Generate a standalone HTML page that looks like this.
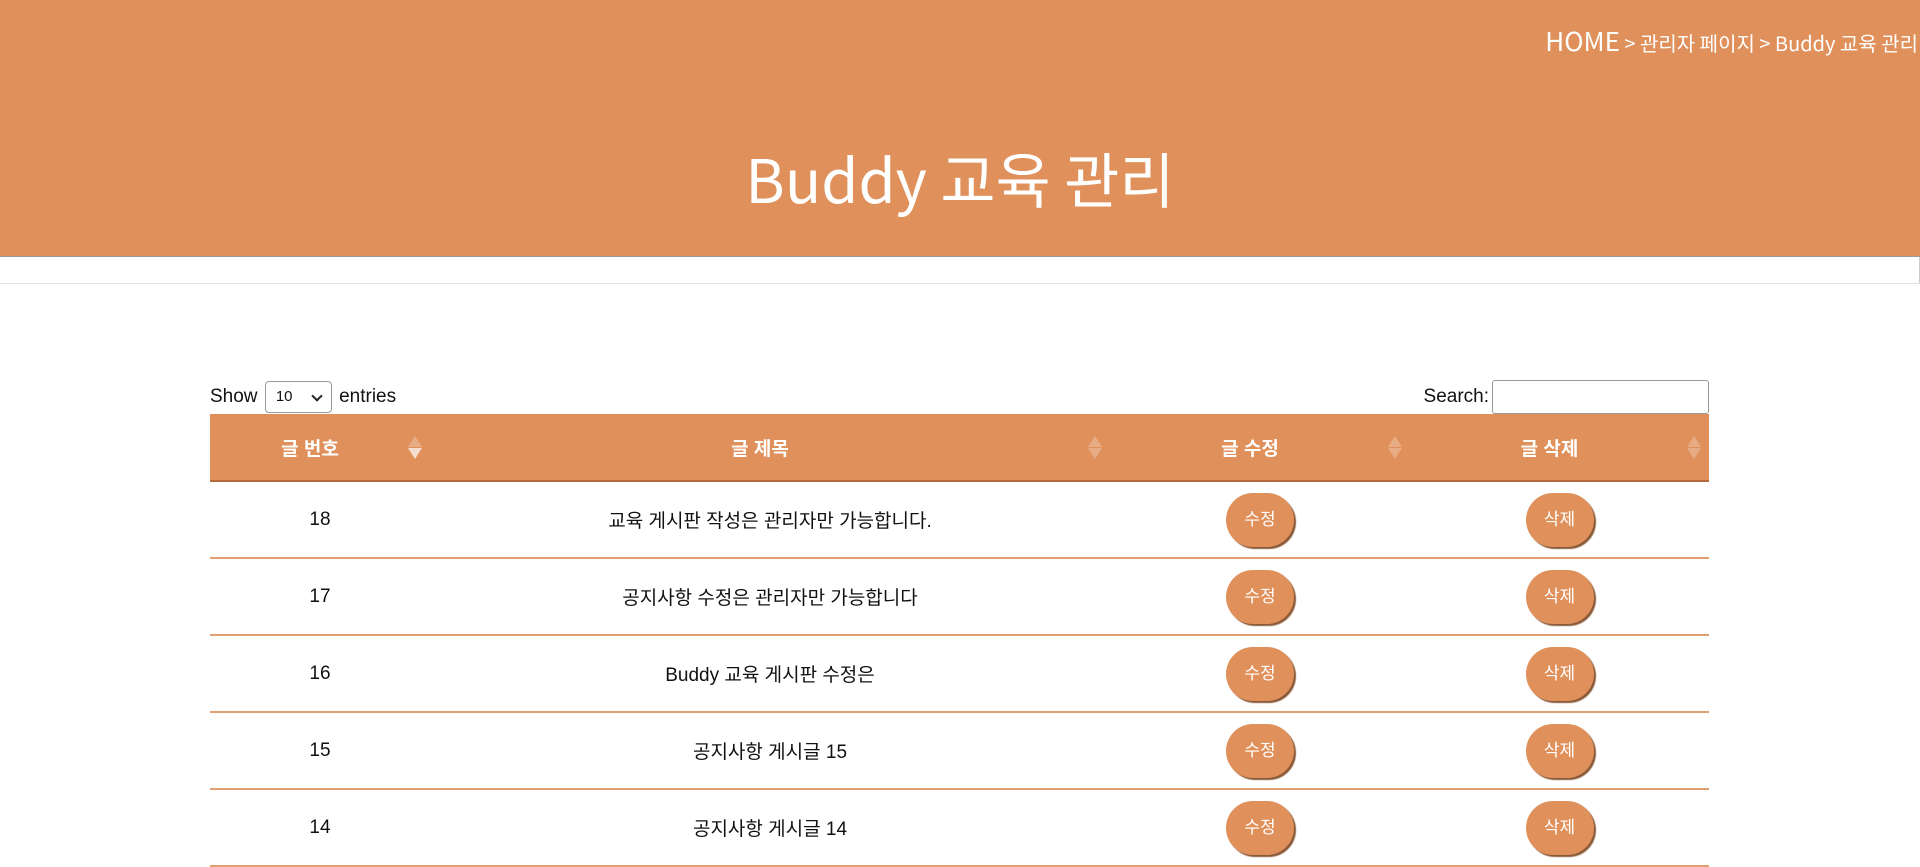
<!DOCTYPE html>
<html><head><meta charset="utf-8"><style>
*{box-sizing:border-box;margin:0;padding:0}
body{width:1920px;height:866px;overflow:hidden;background:#fff;font-family:"Liberation Sans","Noto Sans CJK KR",sans-serif;color:#111}
.hero{position:absolute;left:0;top:0;width:1920px;height:257px;background:#e0915b;border-bottom:1px solid #999}
.crumb{position:absolute;right:2px;top:22px;color:#fff;font-size:20px;white-space:nowrap;font-family:"Noto Sans CJK KR",sans-serif}
.crumb b{font-weight:normal;font-size:26px}
.title{position:absolute;left:0;width:1920px;top:138px;text-align:center;color:#fff;font-size:60px;line-height:80px;font-family:"Noto Sans CJK KR",sans-serif}
.strip{position:absolute;left:0;top:257px;width:1920px;height:27px;border-bottom:1px solid #e4e4e4;border-right:1px solid #ccc}
.show{position:absolute;left:210px;top:381px;font-size:19px;line-height:32px}
.sel{display:inline-block;vertical-align:middle;width:67px;height:32px;border:1px solid #999;border-radius:4px;font-size:15px;line-height:30px;padding-left:10px;position:relative;margin:0 2px}
.sel:after{content:"";position:absolute;right:10px;top:10px;width:6px;height:6px;border-right:2px solid #222;border-bottom:2px solid #222;transform:rotate(45deg)}
.search{position:absolute;right:211px;top:380px;font-size:19px;line-height:33px}
.search span{display:inline-block;vertical-align:middle;width:217px;height:34px;border:1px solid #999;border-radius:3px;margin-left:3px}
table{position:absolute;left:210px;top:414px;width:1499px;border-collapse:collapse}
th{background:#e0915b;color:#fff;font-weight:bold;font-size:19px;height:67px;border-bottom:2px solid #b46a3a;position:relative;padding-right:20px}
th i{position:absolute;right:15px;top:22px;width:0;height:0}
th i:before{content:"";position:absolute;left:-7px;top:0;border:7px solid transparent;border-top:0;border-bottom:11px solid rgba(255,255,255,.25)}
th i:after{content:"";position:absolute;left:-7px;top:12px;border:7px solid transparent;border-bottom:0;border-top:11px solid rgba(255,255,255,.25)}
th i.d:after{border-top-color:rgba(255,255,255,.7)}
td{height:77px;border-bottom:2px solid #e0a070;text-align:center;font-size:19px}
.b{display:inline-block;width:68px;height:54px;border-radius:27px;background:#e0915b;color:#fff;font-size:17px;line-height:54px;box-shadow:2px 2px 1px #8a5a38;vertical-align:middle}
</style></head><body>
<div class="hero"><div class="crumb"><b>HOME</b> &gt; 관리자 페이지 &gt; Buddy 교육 관리</div>
<div class="title">Buddy 교육 관리</div></div>
<div class="strip"></div>
<div class="show">Show <span class="sel">10</span> entries</div>
<div class="search">Search:<span></span></div>
<table>
<tr><th style="width:220px">글 번호<i class="d"></i></th><th style="width:680px">글 제목<i></i></th><th style="width:300px">글 수정<i></i></th><th>글 삭제<i></i></th></tr>
<tr><td>18</td><td>교육 게시판 작성은 관리자만 가능합니다.</td><td><span class="b">수정</span></td><td><span class="b">삭제</span></td></tr>
<tr><td>17</td><td>공지사항 수정은 관리자만 가능합니다</td><td><span class="b">수정</span></td><td><span class="b">삭제</span></td></tr>
<tr><td>16</td><td>Buddy 교육 게시판 수정은</td><td><span class="b">수정</span></td><td><span class="b">삭제</span></td></tr>
<tr><td>15</td><td>공지사항 게시글 15</td><td><span class="b">수정</span></td><td><span class="b">삭제</span></td></tr>
<tr><td>14</td><td>공지사항 게시글 14</td><td><span class="b">수정</span></td><td><span class="b">삭제</span></td></tr>
</table>
</body></html>
